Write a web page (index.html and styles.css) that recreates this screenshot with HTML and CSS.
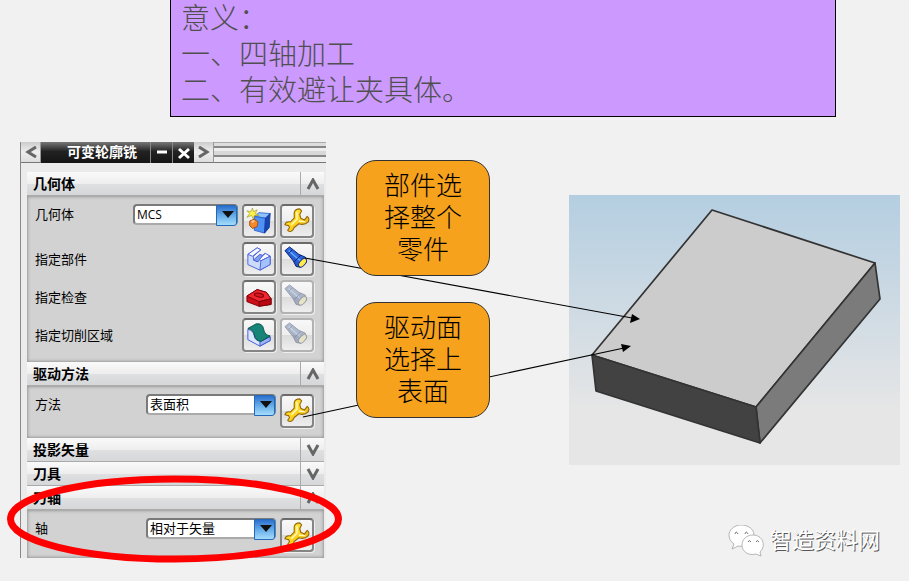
FILE: index.html
```html
<!DOCTYPE html>
<html lang="zh-CN">
  <head>
    <meta charset="UTF-8" />
    <meta name="viewport" content="width=device-width, initial-scale=1.0" />
    <title>可变轮廓铣</title>
    <link rel="stylesheet" href="styles.css">
  </head>
  <body>
    <!-- 公用图标 -->
    <svg class="defs" width="0" height="0" aria-hidden="true">
      <defs>
        <linearGradient id="gold" x1="0" y1="0" x2="1" y2="1">
          <stop offset="0" stop-color="#ffe93a" />
          <stop offset="0.5" stop-color="#ffd820" />
          <stop offset="1" stop-color="#e0a010" />
        </linearGradient>
        <linearGradient id="tube" x1="0" y1="1" x2="1" y2="0">
          <stop offset="0" stop-color="#102a96" />
          <stop offset="0.55" stop-color="#2f6fe4" />
          <stop offset="1" stop-color="#0d2488" />
        </linearGradient>
        <linearGradient id="sky" x1="0" y1="0" x2="0" y2="1">
          <stop offset="0" stop-color="#b4cee1" />
          <stop offset="0.8" stop-color="#e6e6e6" />
        </linearGradient>
        <symbol id="wrench" viewBox="0 0 28 28">
          <path d="M19 3 L17 1 Q12 1 11 5 L11 11 L7 15 Q2 14 1 18 L5 19 L6 21 L4 24 Q7 27 10 23 L11 21 L16 17 Q22 19 26 15 Q28 11 25 9 L22 13 L18 11 L17 7 Z" fill="url(#gold)" stroke="#94680e" stroke-width="1.2" stroke-linejoin="round" />
          <path d="M14 4 L14 12 L8 18 M16 14 L23 15" fill="none" stroke="#fffbc4" stroke-width="1.5" />
        </symbol>
        <symbol id="torch" viewBox="0 0 28 28">
          <path d="M1 5 L6 1 L16 9 L23 12 L24 18 L18 23 L13 22 L10 16 Z" fill="url(#tube)" stroke="#0b1d70" />
          <path d="M5 5 L14 13 L18 16" fill="none" stroke="#69a8ff" stroke-width="1.5" />
          <path d="M9 4 L5 8 M18 10 L11 17" stroke="#0b1d70" />
          <ellipse cx="20" cy="18" rx="3" ry="5.5" transform="rotate(40 20 18)" fill="#ffec4a" stroke="#17308a" />
        </symbol>
      </defs>
    </svg>

    <div class="slide">
      <div class="note">
        <p>意义：</p>
        <p>一、四轴加工</p>
        <p>二、有效避让夹具体。</p>
      </div>

      <main class="content">
        <form class="panel">
          <div class="titlebar">
            <button type="button" class="nav" aria-label="上一个"><svg width="12" height="12"><path d="M11 1 L3 6 L11 11" /></svg></button>
            <h1>可变轮廓铣</h1>
            <button type="button" class="dark" aria-label="最小化"><svg width="14" height="14"><path d="M2 6 H12" /></svg></button>
            <button type="button" class="dark" aria-label="关闭"><svg width="14" height="14"><path d="M2 3 L12 12 M12 3 L2 12" /></svg></button>
            <button type="button" class="nav" aria-label="下一个"><svg width="12" height="12"><path d="M1 1 L9 6 L1 11" /></svg></button>
            <span class="grip"></span>
          </div>

          <div class="sections">
            <div class="section-head">
              <h2>几何体</h2>
              <button type="button" aria-label="收起几何体"><svg width="14" height="12"><path d="M2 11 L7 2 L12 11" /></svg></button>
            </div>
            <div class="section-body">
              <div class="row top">
                <label for="geometry">几何体</label>
                <span class="select narrow"><select id="geometry"><option>MCS</option></select></span>
                <button type="button" class="tool" aria-label="新建几何体">
                  <svg viewBox="0 0 28 28">
                    <path d="M9 9 L14 5 L26 6 L21 11 Z" fill="#8fc0ff" stroke="#356ccc" />
                    <path d="M9 9 L21 11 L20 27 L9 24 Z" fill="#4f92f5" stroke="#2d61ca" />
                    <path d="M21 11 L26 6 L25 21 L20 27 Z" fill="#1746b4" stroke="#173b99" />
                    <path d="M7 0 L8 4 L12 2 L10 6 L14 8 L9 8 L8 12 L6 8 L1 10 L4 6 L1 3 L5 4 Z" fill="#fff04a" stroke="#9a9a22" stroke-width="0.7" />
                    <path d="M4 14 L9 12 L13 15 L12 20 L7 22 L4 19 Z" fill="#f58a2c" stroke="#a84a10" />
                    <path d="M6 15 L9 14" stroke="#ffd09a" stroke-width="2" />
                  </svg>
                </button>
                <button type="button" class="tool" aria-label="编辑几何体"><svg><use href="#wrench" /></svg></button>
              </div>
              <div class="row">
                <span class="label">指定部件</span>
                <button type="button" class="tool" aria-label="指定部件">
                  <svg viewBox="0 0 28 28" stroke="#4a5fd8" stroke-linejoin="round">
                    <path d="M2 9 L12 2 L16 4 L8 11 L8 15 L12 17 L20 8 L26 11 L26 20 L15 26 L2 20 Z" fill="#cbdcff" />
                    <path d="M2 9 L12 2 L16 4 L7 11 Z M14 14 L21 8 L26 11 L16 16 Z" fill="#f4f8ff" />
                    <path d="M8 15 L15 9 L18 10 L13 17 Z" fill="#7f9ff0" />
                    <path d="M16 16 L26 11 L26 20 L15 26 Z" fill="#a5c3fb" />
                  </svg>
                </button>
                <button type="button" class="tool" aria-label="显示部件"><svg><use href="#torch" /></svg></button>
              </div>
              <div class="row">
                <span class="label">指定检查</span>
                <button type="button" class="tool" aria-label="指定检查">
                  <svg viewBox="0 0 28 28" stroke="#7c0008" stroke-linejoin="round">
                    <path d="M1 13 L12 6 L22 9 L27 16 L27 22 L14 24 L1 19 Z" fill="#cf0d18" />
                    <path d="M1 13 L12 6 L22 9 L27 16 L14 19 Z" fill="#ee2630" />
                    <path d="M14 19 L14 24 L27 22 L27 16 Z" fill="#b80612" />
                    <ellipse cx="14" cy="12" rx="5" ry="2" transform="rotate(12 14 12)" fill="#d51720" />
                  </svg>
                </button>
                <button type="button" class="tool" aria-label="显示检查" disabled><svg><use href="#torch" /></svg></button>
              </div>
              <div class="row">
                <span class="label">指定切削区域</span>
                <button type="button" class="tool" aria-label="指定切削区域">
                  <svg viewBox="0 0 28 28" stroke-linejoin="round">
                    <path d="M2 8 Q8 9 9 15 Q10 21 16 20 L26 16 L26 20 L15 26 L2 19 Z" fill="#dbe6ff" stroke="#4056cf" />
                    <path d="M15 21 L26 16 L26 20 L15 26 Z" fill="#97b2f7" stroke="#4056cf" />
                    <path d="M2 7 L11 2 Q18 1 19 8 Q20 14 26 15 L16 21 Q10 20 9 14 Q8 8 2 7 Z" fill="#168476" stroke="#085048" />
                  </svg>
                </button>
                <button type="button" class="tool" aria-label="显示切削区域" disabled><svg><use href="#torch" /></svg></button>
              </div>
            </div>

            <div class="section-head">
              <h2>驱动方法</h2>
              <button type="button" aria-label="收起驱动方法"><svg width="14" height="12"><path d="M2 11 L7 2 L12 11" /></svg></button>
            </div>
            <div class="section-body">
              <div class="row top">
                <label for="method">方法</label>
                <span class="select"><select id="method"><option>表面积</option></select></span>
                <button type="button" class="tool" aria-label="编辑驱动方法"><svg><use href="#wrench" /></svg></button>
              </div>
            </div>

            <div class="section-head">
              <h2>投影矢量</h2>
              <button type="button" aria-label="展开投影矢量"><svg width="14" height="12"><path d="M2 1 L7 10 L12 1" /></svg></button>
            </div>
            <div class="section-head">
              <h2>刀具</h2>
              <button type="button" aria-label="展开刀具"><svg width="14" height="12"><path d="M2 1 L7 10 L12 1" /></svg></button>
            </div>
            <div class="section-head">
              <h2>刀轴</h2>
              <button type="button" aria-label="收起刀轴"><svg width="14" height="12"><path d="M2 11 L7 2 L12 11" /></svg></button>
            </div>
            <div class="section-body last">
              <div class="row top">
                <label for="axis">轴</label>
                <span class="select"><select id="axis"><option>相对于矢量</option></select></span>
                <button type="button" class="tool" aria-label="编辑刀轴"><svg><use href="#wrench" /></svg></button>
              </div>
            </div>
          </div>
        </form>

        <div class="callouts">
          <p class="callout">部件选择整个零件</p>
          <p class="callout">驱动面选择上表面</p>
        </div>

        <div class="side">
          <svg class="part" viewBox="0 0 331 270" preserveAspectRatio="xMinYMin meet" role="img" aria-label="零件">
            <rect width="331" height="270" fill="url(#sky)" />
            <g stroke="#333" stroke-width="1.7" stroke-linejoin="round">
              <path d="M143 15 L306 68 L187 212 L23 160 Z" fill="#ccc" />
              <path d="M306 68 L311 104 L191 248 L187 212 Z" fill="#7b7b7b" />
              <path d="M23 160 L187 212 L191 248 L27 196 Z" fill="#424242" />
            </g>
          </svg>
          <div class="watermark">
            <svg width="36" height="32" viewBox="0 0 36 32" fill="#fff" stroke="#999" stroke-width="0.7">
              <path d="M13 0 C6 0 1 5 1 10 C1 14 3 17 6 19 L4 24 L10 21 C20 23 26 17 26 10 C26 4 20 0 13 0 Z" />
              <path d="M25 10 C19 10 14 14 14 20 C14 27 21 31 28 29 L33 31 L32 27 C39 20 34 10 25 10 Z" />
              <path d="M7 9 Q8 5 10 9 M17 9 Q18 5 20 9 M20 17 Q21 14 23 17 M28 17 Q29 14 31 17" fill="none" stroke="#777" stroke-width="1" />
            </svg>
            <span>智造资料网</span>
          </div>
        </div>
      </main>

      <!-- 引线和红圈 -->
      <svg class="marks" width="700" height="581" aria-hidden="true">
        <path d="M305 258 L632 318 M303 417 L624 348" stroke="#000" stroke-width="1.2" />
        <path d="M640 319 L630 323 L632 314 Z M631 346 L621 344 L623 352 Z" />
        <ellipse cx="174.5" cy="519" rx="164" ry="40" fill="none" stroke="#f00" stroke-width="7" />
      </svg>
    </div>
  </body>
</html>
```
FILE: styles.css
```css
* {
  box-sizing: border-box;
}
body {
  margin: 0;
  background: #f1f1f1;
  color: #000;
  font-family: "Liberation Sans", "Noto Sans CJK SC", sans-serif;
  font-size: 13px;
}
h1,
h2,
p {
  margin: 0;
}
button {
  padding: 0;
  border: 0;
  font: inherit;
}
.defs {
  position: absolute;
}
.slide {
  position: relative;
  min-height: 100vh;
}
.note {
  margin: 0 73px 0 170px;
  padding: 1px 10px 7px;
  border: 1px solid #000;
  border-top: 0;
  background: #c9f;
  color: #505050;
  font-size: 29px;
  font-weight: 300;
  line-height: 36px;
}
.content {
  display: grid;
  grid-template-columns: 306px 134px minmax(0, 1fr);
  column-gap: 30px;
  padding: 25px 9px 23px 20px;
}

/* 对话框 */
.panel {
  border-left: 1px solid #888;
  background: #ebebeb;
}
.titlebar {
  display: flex;
  height: 21px;
  background: #ddd;
}
.titlebar h1 {
  width: 109px;
  padding-left: 26px;
  background: linear-gradient(#777, #222 45%, #151515);
  color: #fff;
  font-size: 14px;
  line-height: 20px;
  white-space: nowrap;
}
.titlebar button {
  display: flex;
  align-items: center;
  justify-content: center;
}
.titlebar path {
  fill: none;
  stroke-width: 3;
}
.nav {
  width: 20px;
  border-right: 1px solid #999;
  border-bottom: 1px solid #777;
  background: linear-gradient(#ccc, #eee 50%, #ddd);
  stroke: #666;
}
.dark {
  width: 22px;
  border-left: 1px solid #888;
  background: linear-gradient(#777, #222 45%, #151515);
  stroke: #fff;
}
.grip {
  flex: 1;
  background: linear-gradient(#aaa 0 1px, #ddd 1px 4px, #888 4px 6px, #eee 6px 9px, #d8d8d8 9px 13px, #888 13px 15px, #eee 15px 20px, #777 20px);
}
.sections {
  margin: 9px 2px 0 6px;
}
.section-head {
  display: flex;
  justify-content: space-between;
  height: 24px;
  border-bottom: 1px solid #aaa;
  background: linear-gradient(#fafafa, #eee 50%, #dfe0e1 51%, #d6d7d9);
}
.section-head h2 {
  padding-left: 6px;
  font-size: 14px;
  line-height: 24px;
}
.section-head button {
  display: flex;
  align-items: center;
  justify-content: center;
  width: 24px;
  border-left: 1px solid #aaa;
  background: none;
}
.section-head path {
  fill: none;
  stroke: #666;
  stroke-width: 3;
}
.section-body {
  display: grid;
  gap: 4px;
  padding: 8px 10px 10px 8px;
  background: #d2d2d2;
  box-shadow: inset 0 0 3px 1px #999;
}
.section-body.last {
  padding-bottom: 6px;
}
.row {
  display: flex;
  align-items: center;
  gap: 4px;
}
.row.top {
  align-items: flex-start;
}
.row label,
.row .label {
  flex: 1;
  line-height: 21px;
}
.select {
  position: relative;
  width: 130px;
  height: 21px;
}
.select.narrow {
  width: 105px;
}
.select select {
  display: block;
  width: 100%;
  height: 100%;
  padding: 0 20px 0 2px;
  border: 2px solid #7a7a7a;
  border-right-color: #58a;
  border-bottom-color: #aaa;
  border-radius: 4px;
  appearance: none;
  background: #fff;
  color: #000;
  font: 13px/17px "Liberation Sans", "Noto Sans CJK SC", sans-serif;
}
.select.narrow select {
  font-family: "Open Sans", sans-serif;
  font-size: 12px;
}
.select::after {
  content: "";
  position: absolute;
  top: 1px;
  right: 1px;
  width: 19px;
  height: 19px;
  border: 1px solid #2468b8;
  border-radius: 0 3px 3px 0;
  background: linear-gradient(#2c70ce, #65ace9 50%, #a5dcfb);
  pointer-events: none;
}
.select::before {
  content: "";
  position: absolute;
  z-index: 1;
  top: 7px;
  right: 4px;
  border: 6px solid transparent;
  border-top: 7px solid #111;
  border-bottom: 0;
  pointer-events: none;
}
.tool {
  display: flex;
  align-items: center;
  justify-content: center;
  width: 34px;
  height: 34px;
  border: 2px solid #858585;
  border-top-color: #6b6b6b;
  border-radius: 4px;
  background: linear-gradient(#f8f8f8, #eee 50%, #dcdcdc 51%, #eee);
  box-shadow: 1px 1px 0 #eee;
}
.tool svg {
  width: 26px;
  height: 26px;
}
.tool:disabled {
  border-color: #b2b2b2;
}
.tool:disabled svg {
  opacity: 0.4;
  filter: saturate(0.45);
}

/* 说明框 */
.callouts {
  position: relative;
  z-index: 2;
  display: flex;
  flex-direction: column;
  gap: 26px;
  padding-top: 18px;
}
.callout {
  padding: 9px 26px;
  border: 1px solid #333;
  border-radius: 20px;
  background: #f6a21c;
  font-size: 26px;
  font-weight: 300;
  line-height: 32px;
  text-align: center;
}
.side {
  display: flex;
  flex-direction: column;
  justify-content: space-between;
  padding: 53px 0 1px 49px;
}
.part {
  display: block;
  width: 100%;
}
.watermark {
  display: flex;
  align-items: center;
  justify-content: flex-end;
  gap: 6px;
  padding-right: 20px;
  color: #fff;
  font-size: 22px;
  line-height: 32px;
  text-shadow: 1px 1px 0 #555;
}
.marks {
  position: absolute;
  top: 0;
  left: 0;
  z-index: 1;
  pointer-events: none;
}
```
